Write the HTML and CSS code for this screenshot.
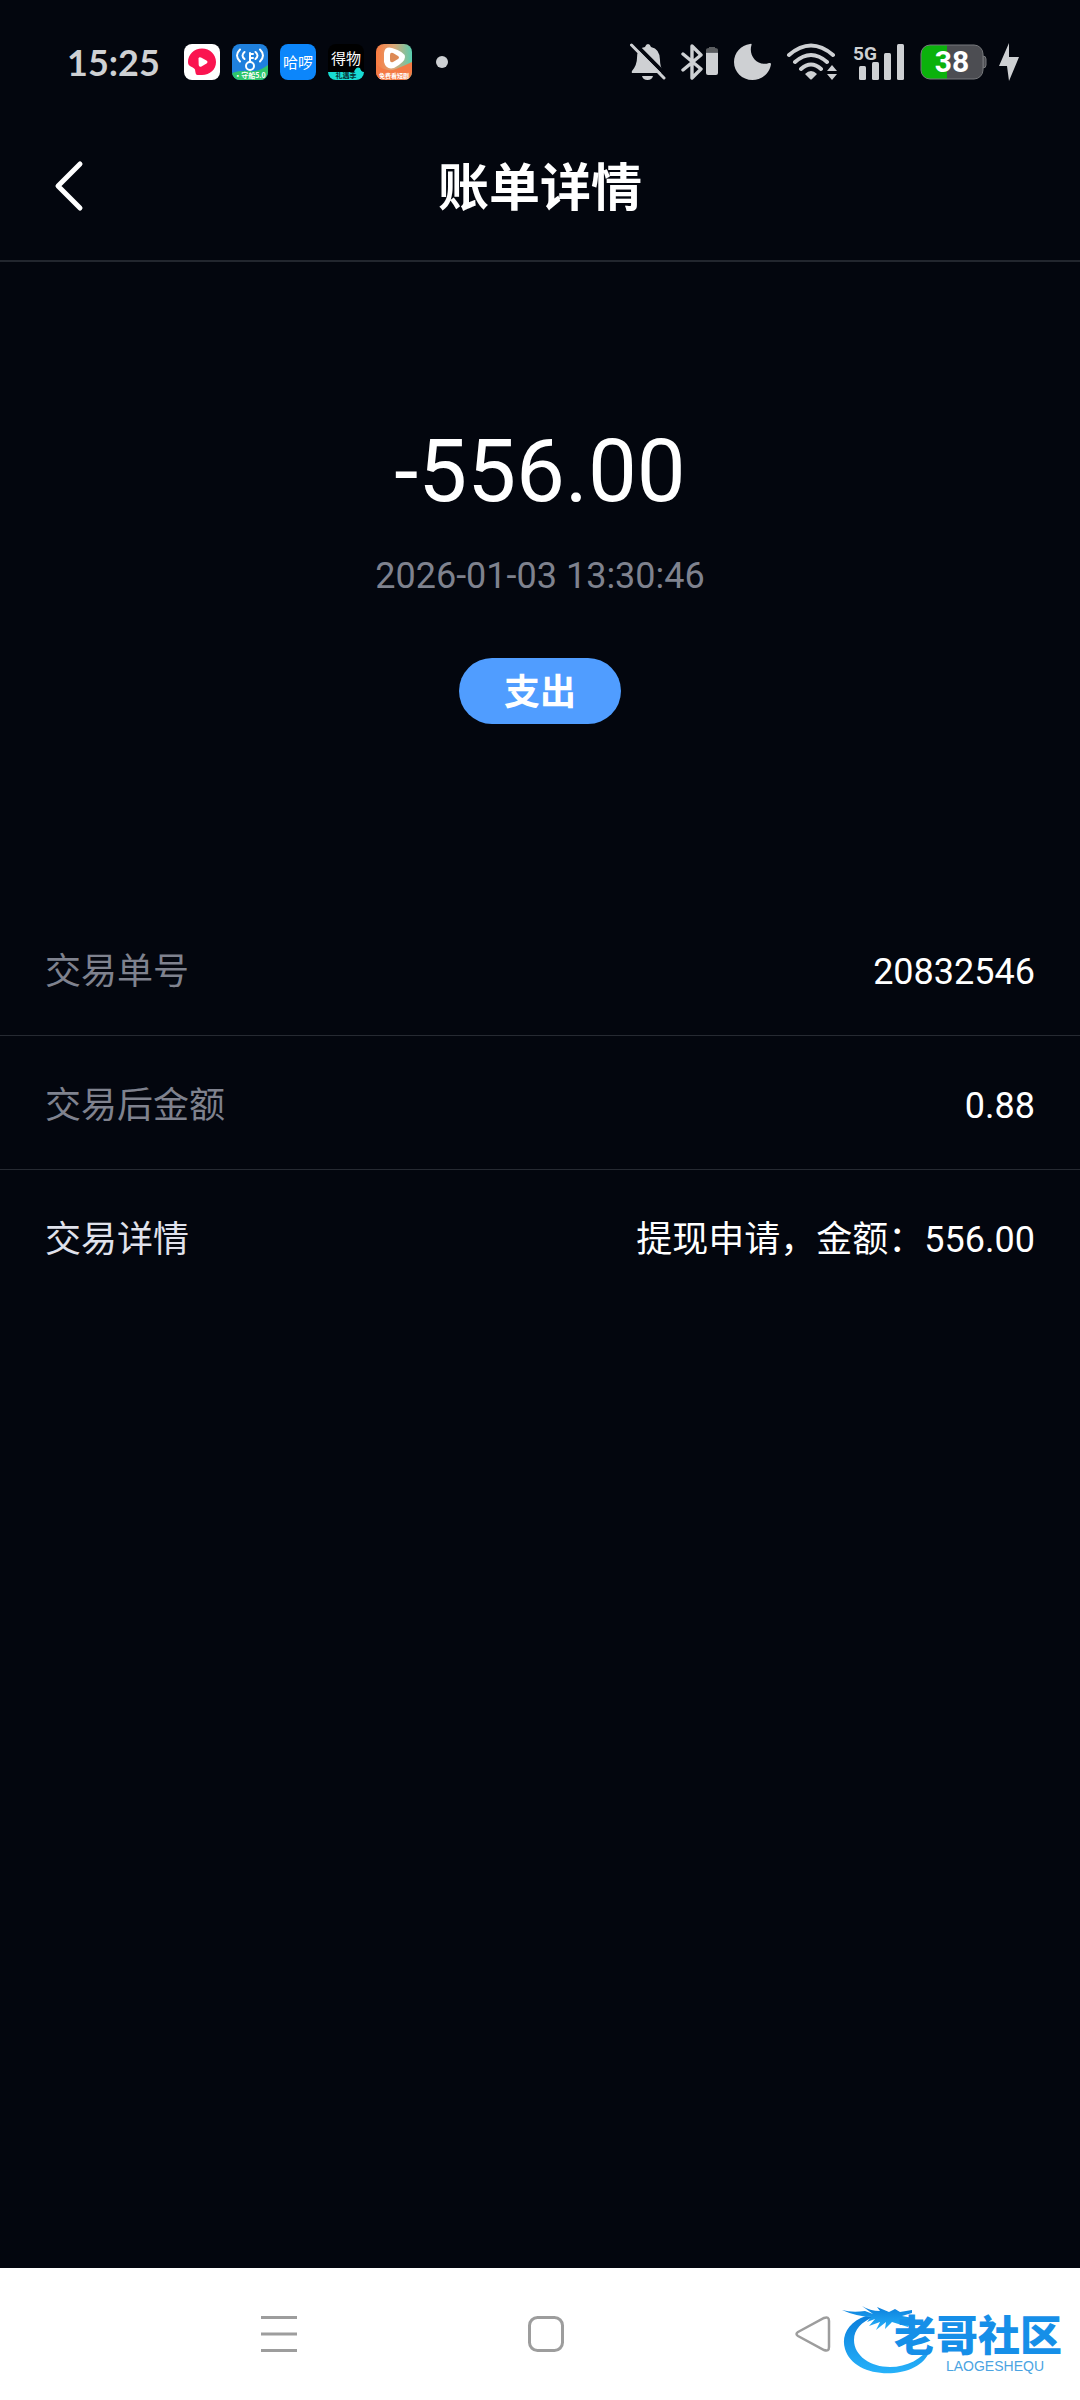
FILE: index.html
```html
<!DOCTYPE html>
<html lang="zh-CN">
<head>
<meta charset="utf-8">
<meta name="viewport" content="width=device-width, initial-scale=1">
<title>账单详情</title>
<link rel="stylesheet" href="styles.css">
</head>
<body>
<div class="screen">
  <div class="status">
    <div class="status-left">
      <span class="clock">15:25</span>
      <div class="apps">
        <svg class="app" viewBox="0 0 36 36"><rect width="36" height="36" rx="8" fill="#fff"/><path d="M18 4.500C26 4.500 32 10.500 32 18S26 31 18 31H13.500C11.500 31 11.500 28 11 25.500C9 22 4 23.500 4 18C4 10.500 10 4.500 18 4.500Z" fill="#fa1450"/><path d="M14.500 14.500Q15 12.500 17 13.500L22.500 16.500Q24.500 18 22.500 19.500L17.500 22.500Q15 23.500 14.700 21Z" fill="#fff"/></svg>
        <svg class="app" viewBox="0 0 36 36"><defs><clipPath id="tile"><rect width="36" height="36" rx="8"/></clipPath></defs><g clip-path="url(#tile)"><rect width="36" height="36" fill="#1f80dd"/><path d="M0 29Q9 26 18 27T36 21V36H0Z" fill="#2fc56b"/><g fill="none" stroke="#fff" stroke-width="2" stroke-linecap="round"><path d="M8 5.500Q2 11.500 8 17.500M12.500 8Q8.500 11.500 12.500 15M28 5.500Q34 11.500 28 17.500M23.500 8Q27.500 11.500 23.500 15M18 9V18M18 10H21M18 14H21"/><circle cx="18" cy="22" r="4"/></g><text x="18" y="34" text-anchor="middle" class="tile-note" fill="#fff">·守船5.0</text></g></svg>
        <svg class="app" viewBox="0 0 36 36"><rect width="36" height="36" rx="8" fill="#0c86fb"/><text x="18" y="24" text-anchor="middle" class="tile-name" fill="#fff">哈啰</text></svg>
        <svg class="app" viewBox="0 0 36 36"><g clip-path="url(#tile)"><rect width="36" height="36" fill="#000"/><text x="18" y="20" text-anchor="middle" class="tile-name" fill="#fff">得物</text><path d="M0 28H26Q28 22 32 24Q33 28 36 28V36H0Z" fill="#18dcd4"/><text x="18" y="34" text-anchor="middle" class="tile-note" fill="#083638">礼遇季</text></g></svg>
        <svg class="app" viewBox="0 0 36 36"><defs><linearGradient id="video" x1="0" y1="0" x2="1" y2="0"><stop offset="0" stop-color="#fa7a40"/><stop offset=".5" stop-color="#d9a878"/><stop offset="1" stop-color="#58cdaf"/></linearGradient></defs><g clip-path="url(#tile)"><rect width="36" height="36" fill="url(#video)"/><path d="M0 20Q10 29 20 25T36 18V36H0Z" fill="#f47a45"/><path d="M8 9Q9 2 16 4Q29 8 29 13Q29 18 18 24Q10 26 8 18Z" fill="#fff"/><path d="M14 11Q14 8 17 9L22 12Q24 13.500 22 15L17 18Q14 19 14 16Z" fill="#dd8a55"/><text x="18" y="34" text-anchor="middle" class="tile-tiny" fill="#fff">免费看短剧</text></g></svg>
      </div>
      <span class="dot"></span>
    </div>
    <div class="status-right">
      <svg class="i-bell" viewBox="0 0 36 38" fill="#ced0d3"><path d="M3 30Q1 30 2 28Q7 22 7 15Q7 5 15 4Q16 1 18 1T21 4Q30 6 30 17Q30 24 33 28Q34 30 32 30ZM12 33H23Q22 37 17.500 37T12 33Z"/><path d="M5 1L38 34" stroke="#03060e" stroke-width="4"/><path d="M1.500 2L34 35" stroke="#ced0d3" stroke-width="3" stroke-linecap="round"/></svg>
      <svg class="i-bt" viewBox="0 0 38 38"><path d="M2 11L20 26L11 35V3L20 12L2 27" fill="none" stroke="#ced0d3" stroke-width="3.400" stroke-linejoin="round" stroke-linecap="round"/><path d="M25 9V7Q25 5 28 5V4H34V5Q37 5 37 7V9Z" fill="#5b5d60"/><path d="M25 9.500H37V30Q37 32 35 32H27Q25 32 25 30Z" fill="#ced0d3"/></svg>
      <svg class="i-moon" viewBox="0 0 37 38"><path d="M16 1Q18 0 17.500 2C14 13 24 24 35 20Q37 19.500 37 21C36 30 28 37 18.500 37C8 37 0 29 0 19C0 10 7 2 16 1Z" fill="#ced0d3"/></svg>
      <svg class="i-wifi" viewBox="0 0 52 38"><g fill="none" stroke="#ced0d3" stroke-width="4" stroke-linecap="round"><path d="M3 12Q25-7 47 12M9 19Q25 5 41 19M15 26Q25 17 35 26"/></g><path d="M19 31Q25 25 31 31L26 36Q25 37 24 36ZM41 28L46 22L51 28ZM41 31H51L46 37Z" fill="#ced0d3"/></svg>
      <svg class="i-signal" viewBox="0 0 52 38" fill="#ced0d3"><text x="0" y="17" class="net">5G</text><rect x="6" y="23" width="7" height="14" rx="1.500"/><rect x="19" y="19" width="7" height="18" rx="1.500"/><rect x="31" y="10" width="7" height="27" rx="1.500"/><rect x="44" y="1" width="7" height="36" rx="1.500"/></svg>
      <svg class="i-battery" viewBox="0 0 67 36"><defs><clipPath id="cell"><rect x="1" y="1" width="62" height="34" rx="9"/></clipPath></defs><path d="M63 12Q66 12 66 15V21Q66 24 63 24Z" fill="#4c4d52" stroke="#77797c"/><g clip-path="url(#cell)"><rect width="64" height="36" fill="#4c4d52"/><rect width="27" height="36" fill="#0bb20c"/></g><rect x="1" y="1" width="62" height="34" rx="9" fill="none" stroke="#77797c"/><text x="32" y="28" text-anchor="middle" class="charge" fill="#fff">38</text></svg>
      <svg class="i-bolt" viewBox="0 0 22 40"><path d="M11 1L1 24H9L11 39L21 15H11Z" fill="#ced0d3"/></svg>
    </div>
  </div>

  <header class="header">
    <button class="back" type="button" aria-label="返回"><svg width="32" height="52" viewBox="0 0 32 52"><path d="M28 4L6 26L28 48" fill="none" stroke="#fff" stroke-width="5" stroke-linecap="round" stroke-linejoin="round"/></svg></button>
    <h1 class="title">账单详情</h1>
  </header>

  <main class="main">
    <section class="summary">
      <p class="amount">-556.00</p>
      <p class="date">2026-01-03 13:30:46</p>
      <span class="kind">支出</span>
    </section>
    <dl class="rows">
      <div class="row"><dt>交易单号</dt><dd>20832546</dd></div>
      <div class="row"><dt>交易后金额</dt><dd>0.88</dd></div>
      <div class="row row-detail"><dt>交易详情</dt><dd>提现申请，金额：556.00</dd></div>
    </dl>
  </main>

  <nav class="nav">
    <button type="button" aria-label="菜单"><svg width="38" height="38" viewBox="0 0 38 38"><path d="M1 2.500H37M1 19H37M1 35.500H37" stroke="#9d9d9d" stroke-width="3"/></svg></button>
    <button type="button" aria-label="主页"><svg width="38" height="38" viewBox="0 0 38 38"><rect x="2.500" y="2.500" width="33" height="33" rx="8" fill="none" stroke="#9d9d9d" stroke-width="3"/></svg></button>
    <button type="button" aria-label="后退"><svg width="38" height="38" viewBox="0 0 38 38"><path d="M4 17L30 3Q35 1 35 6V32Q35 37 30 35L4 21Q1 19 4 17Z" fill="none" stroke="#9d9d9d" stroke-width="2.500"/></svg></button>
    <div class="brand">
      <svg class="dragon" viewBox="0 0 90 74"><defs><linearGradient id="sea" x1="0" y1="0" x2="0" y2="1"><stop offset="0" stop-color="#0b7edb"/><stop offset="1" stop-color="#27b2fa"/></linearGradient></defs><g fill="url(#sea)"><path d="M24 14C6 20-1 34 3 47C8 64 29 73 52 71C73 69 87 58 89 44C80 57 65 65 48 65C29 65 12 54 12 38C12 27 20 20 31 15Z"/><path d="M0 8Q10 11 23 9L31 12L20 4Q28 9 38 9L35 5L47 10L53 7L58 10L70 8V11L60 14L71 16L69 19L58 18L68 22L66 25L50 20L43 27L44 20L34 28L38 20L27 24L33 17L25 20L29 15Q13 14 0 8Z"/></g></svg>
      <div class="brand-name"><span class="brand-cn">老哥社区</span><span class="brand-en">LAOGESHEQU</span></div>
    </div>
  </nav>
</div>
</body>
</html>
```
FILE: styles.css
```css
* { box-sizing: border-box; }

body, p, h1, dl, dd { margin: 0; }

body {
  background: #03060e;
  color: #fff;
  font-family: Roboto, "Noto Sans CJK SC", sans-serif;
}

button {
  padding: 0;
  border: 0;
  background: none;
}

svg { display: block; }

.screen {
  display: flex;
  flex-direction: column;
  min-height: 100vh;
}

/* system status bar */
.status {
  display: flex;
  justify-content: space-between;
  align-items: center;
  height: 124px;
  padding: 0 60px 0 67px;
}

.status-left, .status-right, .apps {
  display: flex;
  align-items: center;
}

.status-left { gap: 24px; }
.apps { gap: 12px; }
.status-right { gap: 15px; }

.clock {
  color: #ced0d3;
  font: bold 36px/48px Lato, sans-serif;
}

.app { width: 36px; height: 36px; }

.dot {
  width: 12px;
  height: 12px;
  border-radius: 50%;
  background: #ced0d3;
}

.tile-name { font: 15px "Noto Sans CJK SC", sans-serif; }
.tile-note { font: bold 7px "Noto Sans CJK SC", sans-serif; }
.tile-tiny { font: bold 6px "Noto Sans CJK SC", sans-serif; }
.net { font: bold 19px Roboto, sans-serif; }
.charge { font: bold 30px Roboto, sans-serif; }

.i-signal { overflow: visible; }

.i-bell { width: 36px; height: 38px; }
.i-bt { width: 38px; height: 38px; }
.i-moon { width: 37px; height: 38px; }
.i-wifi { width: 52px; height: 38px; }
.i-signal { width: 52px; height: 38px; }
.i-battery { width: 67px; height: 36px; }
.i-bolt { width: 22px; height: 40px; margin-left: -4px; }

/* page header */
.header {
  display: grid;
  grid-template-columns: 1fr auto 1fr;
  align-items: center;
  height: 138px;
  padding: 0 52px 12px;
  border-bottom: 2px solid #22262e;
}

.back { justify-self: start; }

.title {
  padding-top: 6px;
  font-size: 51px;
  line-height: 72px;
}

/* bill */
.main { flex: 1; }

.summary {
  display: flex;
  flex-direction: column;
  align-items: center;
  padding: 157px 45px 178px;
}

.amount {
  font-size: 87px;
  line-height: 104px;
}

.date {
  margin-top: 29px;
  color: #7f828e;
  font-size: 36px;
  line-height: 48px;
}

.kind {
  margin-top: 58px;
  padding: 4px 45px 0;
  border-radius: 33px;
  background: #509dff;
  font-size: 36px;
  font-weight: bold;
  line-height: 62px;
}

.row {
  display: flex;
  justify-content: space-between;
  align-items: center;
  min-height: 134px;
  padding: 6px 45px 0;
  border-bottom: 1px solid #262a32;
  font-size: 36px;
  line-height: 54px;
}

.row dt { color: #7f828e; }

.row-detail { border-bottom: 0; }
.row-detail dt { color: #e0e2ec; }

/* system navigation bar */
.nav {
  position: relative;
  display: flex;
  justify-content: space-between;
  align-items: center;
  height: 132px;
  padding: 0 248px 0 260px;
  background: #fff;
}

.brand {
  position: absolute;
  right: 18px;
  bottom: 24px;
  width: 220px;
  height: 74px;
}

.dragon {
  position: absolute;
  left: 0;
  top: 0;
  width: 90px;
  height: 74px;
}

.brand-name {
  position: relative;
  display: flex;
  flex-direction: column;
  align-items: flex-end;
  padding-top: 14px;
}

.brand-cn {
  color: #168fe8;
  font-size: 42px;
  font-weight: 900;
  line-height: 42px;
}

.brand-en {
  padding-right: 18px;
  color: #4ba4e2;
  font: 14px/16px "Liberation Sans", sans-serif;
}
```
